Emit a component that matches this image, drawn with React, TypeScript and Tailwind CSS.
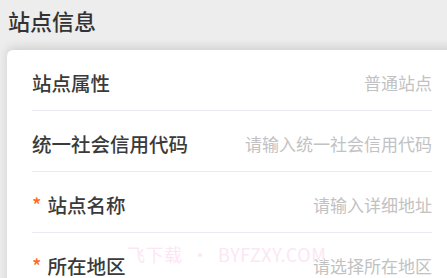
const rows = [
  { label: "站点属性", value: "普通站点", required: false },
  { label: "统一社会信用代码", value: "请输入统一社会信用代码", required: false },
  { label: "站点名称", value: "请输入详细地址", required: true },
  { label: "所在地区", value: "请选择所在地区", required: true },
];

export default function App() {
  return (
    <div
      className="relative w-[447px] h-[278px] overflow-hidden bg-[#ededed]"
      style={{ fontFamily: '"Noto Sans CJK SC", "Noto Sans", sans-serif' }}
    >
      <div className="h-[50px] pl-[8px] pt-[5px] text-[22px] leading-[30px] font-medium text-[#333]">
        站点信息
      </div>
      <div className="ml-[7px] -mr-[20px] rounded-[6px] bg-white pl-[25px] pr-[35px] shadow-[0_-3px_10px_rgba(0,0,0,0.12)]">
        {rows.map((row) => (
          <div
            key={row.label}
            className="flex h-[61px] items-center justify-between border-b border-[#e9e9ef] pt-[5px]"
          >
            <div className="flex items-center text-[19.5px] font-medium text-[#3a3a3a]">
              {row.required && (
                <span className="mr-[6px] text-[#ff6a1a]">*</span>
              )}
              <span>{row.label}</span>
            </div>
            <span className="text-[17px] text-[#c2c2c2]">{row.value}</span>
          </div>
        ))}
      </div>
      <div className="absolute left-[127px] top-[241px] text-[18px] tracking-[0.5px] text-[#fde6f4]">
        飞下载 <span className="mx-[4px]">•</span> BYFZXY.COM
      </div>
    </div>
  );
}
